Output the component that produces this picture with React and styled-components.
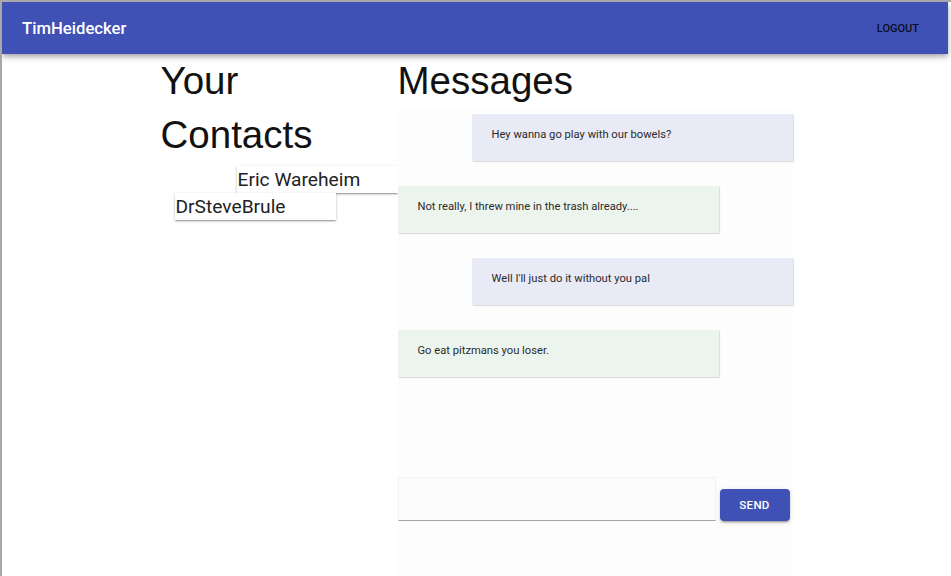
import React from 'react';
import styled, {createGlobalStyle} from 'styled-components';

const GlobalStyle = createGlobalStyle`
  html, body {
    margin: 0;
    padding: 0;
    height: 100%;
    background: #fff;
  }
  body {
    border-top: 2px solid #a8a8a8;
    border-left: 2px solid #a8a8a8;
    box-sizing: border-box;
    overflow: hidden;
    font-family: Roboto, "Liberation Sans", Arial, sans-serif;
  }
  #root {
    height: 100%;
  }
`;

const Page = styled.div`
  display: flex;
  flex-direction: column;
  height: 100%;
`;

const AppBar = styled.header`
  height: 52px;
  flex-shrink: 0;
  margin-right: 3px;
  display: flex;
  align-items: center;
  justify-content: space-between;
  padding: 0 20px 0 20px;
  background-color: #3f51b5;
  box-shadow: 0 2px 4px -1px rgba(0, 0, 0, 0.2), 0 4px 5px 0 rgba(0, 0, 0, 0.14), 0 1px 10px 0 rgba(0, 0, 0, 0.12);
  position: relative;
  z-index: 2;
`;

const Brand = styled.h6`
  margin: 0;
  color: #fff;
  font-size: 16.7px;
  font-weight: 500;
  font-family: Roboto, sans-serif;
`;

const LogoutButton = styled.button`
  border: none;
  background: transparent;
  color: rgba(0, 0, 0, 0.87);
  font-family: Roboto, sans-serif;
  font-size: 11px;
  font-weight: 500;
  text-transform: uppercase;
  padding: 6px 8px;
  margin-right: 1px;
`;

const Main = styled.main`
  flex: 1;
  display: grid;
  grid-template-columns: 237px 395px;
  width: 632px;
  margin: 0 auto;
  min-height: 0;
`;

const Column = styled.section`
  display: flex;
  flex-direction: column;
  min-height: 0;
`;

const Heading = styled.h1`
  margin: 0;
  font-family: "Liberation Sans", Arial, sans-serif;
  font-size: 38.5px;
  font-weight: 400;
  line-height: 54px;
  color: #111;
`;

const ContactList = styled.div`
  display: flex;
  flex-direction: column;
  align-items: flex-start;
  margin-top: 4px;
`;

const Contact = styled.div`
  width: 161px;
  height: 27px;
  margin-left: ${(props) => props.offset}px;
  box-sizing: border-box;
  padding-left: 1px;
  background: #fff;
  font-family: Roboto, sans-serif;
  font-size: 19.2px;
  line-height: 28px;
  color: #222;
  box-shadow: 0 1px 3px 0 rgba(0, 0, 0, 0.2), 0 1px 1px 0 rgba(0, 0, 0, 0.14), 0 2px 1px -1px rgba(0, 0, 0, 0.12);
  white-space: nowrap;
`;

const Panel = styled.div`
  flex: 1;
  display: flex;
  flex-direction: column;
  background: #fdfdfd;
  padding-top: 6px;
  min-height: 0;
`;

const MessageList = styled.div`
  display: flex;
  flex-direction: column;
  gap: 25px;
`;

const Bubble = styled.div`
  width: 321px;
  box-sizing: border-box;
  align-self: ${(props) => (props.mine ? 'flex-end' : 'flex-start')};
  padding: 12px 20px 17px;
  font-family: Roboto, sans-serif;
  font-size: 11.2px;
  line-height: 18px;
  color: #2b2b2b;
  background-color: ${(props) => (props.mine ? '#e8eaf6' : '#ecf5ed')};
  box-shadow: 1px 1px 1px 0 rgba(0, 0, 0, 0.12);
`;

const Composer = styled.div`
  margin-top: auto;
  margin-bottom: 55px;
  display: flex;
  align-items: flex-end;
  gap: 4px;
`;

const TextInput = styled.input`
  width: 318px;
  height: 44px;
  box-sizing: border-box;
  border: 1px solid #f2f2f2;
  border-bottom: 1px solid #a5a5a5;
  background: #fcfcfc;
  outline: none;
  padding: 0 10px;
  font-family: Roboto, sans-serif;
  font-size: 14px;
`;

const SendButton = styled.button`
  width: 70px;
  height: 32px;
  border: none;
  border-radius: 4px;
  background-color: #3f51b5;
  color: #fff;
  font-family: Roboto, sans-serif;
  font-size: 11.5px;
  font-weight: 500;
  text-transform: uppercase;
  letter-spacing: 0.3px;
  box-shadow: 0 3px 1px -2px rgba(0, 0, 0, 0.2), 0 2px 2px 0 rgba(0, 0, 0, 0.14), 0 1px 5px 0 rgba(0, 0, 0, 0.12);
`;

const contacts = [
  {name: 'Eric Wareheim', offset: 76},
  {name: 'DrSteveBrule', offset: 14},
];

const messages = [
  {text: 'Hey wanna go play with our bowels?', mine: true},
  {text: 'Not really, I threw mine in the trash already....', mine: false},
  {text: "Well I'll just do it without you pal", mine: true},
  {text: 'Go eat pitzmans you loser.', mine: false},
];

function App() {
  return (
    <Page>
      <GlobalStyle />
      <AppBar>
        <Brand>TimHeidecker</Brand>
        <LogoutButton>Logout</LogoutButton>
      </AppBar>
      <Main>
        <Column>
          <Heading>Your Contacts</Heading>
          <ContactList>
            {contacts.map((c) => (
              <Contact key={c.name} offset={c.offset}>{c.name}</Contact>
            ))}
          </ContactList>
        </Column>
        <Column>
          <Heading>Messages</Heading>
          <Panel>
            <MessageList>
              {messages.map((m, i) => (
                <Bubble key={i} mine={m.mine}>{m.text}</Bubble>
              ))}
            </MessageList>
            <Composer>
              <TextInput />
              <SendButton>Send</SendButton>
            </Composer>
          </Panel>
        </Column>
      </Main>
    </Page>
  );
}

export default App;
